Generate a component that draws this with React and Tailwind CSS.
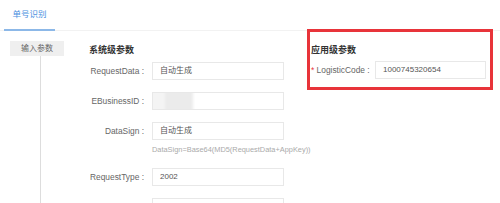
const FONT = "font-['Liberation_Sans','Noto_Sans_CJK_SC',sans-serif]";

const SYS_ROWS = [
  { label: "RequestData :", value: "自动生成" },
  { label: "EBusinessID :", value: "", blurred: true },
  { label: "DataSign :", value: "自动生成", hint: "DataSign=Base64(MD5(RequestData+AppKey))" },
  { label: "RequestType :", value: "2002" },
  { label: "", value: "" },
];

const Field = ({ value, blurred, className = "" }) => (
  <div
    className={`relative h-[18px] border border-[#e8e8e8] bg-white flex items-center px-[7px] text-[8px] text-[#555] overflow-hidden ${className}`}
  >
    {blurred && (
      <div className="absolute left-[-4px] top-[-3px] w-[44px] h-[24px] flex blur-[1.5px]">
        <div className="w-[16px] h-full bg-[#f4f4f4]" />
        <div className="w-[28px] h-full bg-[#ebebeb]" />
      </div>
    )}
    {value}
  </div>
);

export default function App() {
  return (
    <div className={`w-[500px] h-[203px] overflow-hidden bg-white ${FONT}`}>
      {/* tabs */}
      <div className="h-[31px] flex border-b border-[#f2f2f2]">
        <div className="ml-[4px] w-[51px] h-[31px] flex items-center justify-center border-b-2 border-[#8cb8e8] text-[8.5px] text-[#4a8fe0]">
          单号识别
        </div>
      </div>

      <div className="flex">
        {/* left nav */}
        <div className="w-[80px] flex flex-col pl-[10px] pt-[10px]">
          <div className="w-[54px] h-[15px] bg-[#efefef] flex items-center justify-center text-[8px] text-[#666]">
            输入参数
          </div>
          <div className="ml-[30px] w-px h-[160px] bg-[#ddd]" />
        </div>

        {/* system params */}
        <div className="w-[204px] flex flex-col">
          <div className="pl-[9px] pt-[12px] h-[26px] leading-[14px] text-[9px] font-semibold text-[#333]">系统级参数</div>
          <div className="mt-[5px] flex flex-col gap-[12px]">
            {SYS_ROWS.map((row, i) => (
              <div key={i} className="flex flex-col">
                <div className="flex items-center">
                  <div className="w-[64px] text-right text-[8.4px] text-[#666] whitespace-nowrap">{row.label}</div>
                  <Field value={row.value} blurred={row.blurred} className="ml-[8px] w-[132px]" />
                </div>
                {row.hint && (
                  <div className="ml-[72px] mt-[3px] -mb-[1px] h-[14px] leading-[14px] text-[7.4px] text-[#aaa] whitespace-nowrap">
                    {row.hint}
                  </div>
                )}
              </div>
            ))}
          </div>
        </div>

        {/* app params, highlighted */}
        <div className="ml-[27px] relative w-[175px] h-[52px] self-start">
          <div className="absolute left-[-4px] top-[-2px] w-[186px] h-[61px] border-[3px] border-[#e8343a]" />
          <div className="pt-[12px] h-[26px] leading-[14px] text-[9px] font-semibold text-[#333]">应用级参数</div>
          <div className="mt-[4px] flex items-center">
            <div className="w-[64px] text-[8.4px] text-[#666] whitespace-nowrap">
              <span className="text-[#e8343a]">*</span> LogisticCode :
            </div>
            <Field value="1000745320654" className="w-[111px]" />
          </div>
        </div>
      </div>
    </div>
  );
}
